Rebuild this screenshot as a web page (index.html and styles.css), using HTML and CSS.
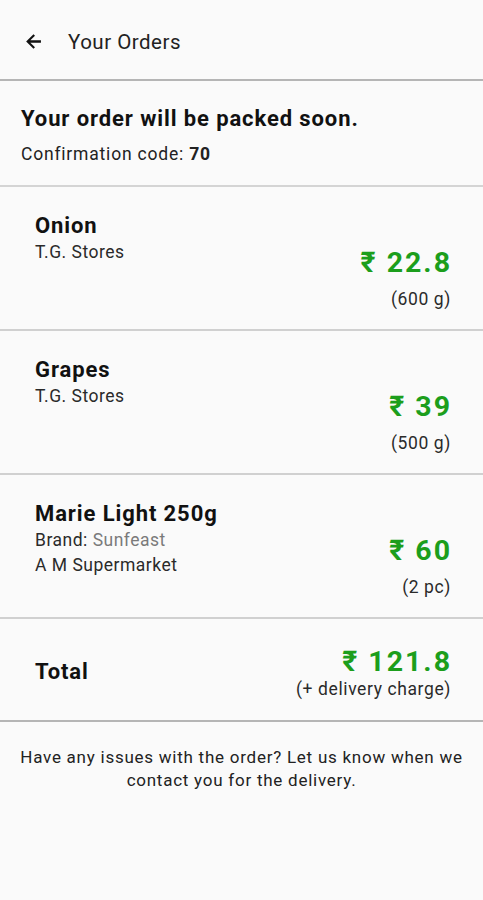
FILE: index.html
```html
<!DOCTYPE html>
<html>
<head>
<meta charset="utf-8">
<link rel="stylesheet" href="styles.css">
</head>
<body>
<div class="app">
  <header class="topbar">
    <svg class="back" width="21" height="21" viewBox="0 0 24 24"><path d="M20.5 10.6H8.4l5.3-5.3L12 3.6 3.6 12l8.4 8.4 1.7-1.7-5.3-5.3h12.1v-2.8z" fill="#111"/></svg>
    <span class="title">Your Orders</span>
  </header>
  <section class="status">
    <div class="status-title">Your order will be packed soon.</div>
    <div class="status-code">Confirmation code: <b>70</b></div>
  </section>
  <section class="item">
    <div class="item-left">
      <div class="item-name">Onion</div>
      <div class="item-sub">T.G. Stores</div>
    </div>
    <div class="item-right">
      <div class="price">₹ 22.8</div>
      <div class="qty">(600 g)</div>
    </div>
  </section>
  <section class="item">
    <div class="item-left">
      <div class="item-name">Grapes</div>
      <div class="item-sub">T.G. Stores</div>
    </div>
    <div class="item-right">
      <div class="price">₹ 39</div>
      <div class="qty">(500 g)</div>
    </div>
  </section>
  <section class="item">
    <div class="item-left">
      <div class="item-name">Marie Light 250g</div>
      <div class="item-sub">Brand: <span class="brand">Sunfeast</span></div>
      <div class="item-sub">A M Supermarket</div>
    </div>
    <div class="item-right">
      <div class="price">₹ 60</div>
      <div class="qty">(2 pc)</div>
    </div>
  </section>
  <section class="total">
    <div class="total-label">Total</div>
    <div class="total-right">
      <div class="price">₹ 121.8</div>
      <div class="qty">(+ delivery charge)</div>
    </div>
  </section>
  <p class="note">Have any issues with the order? Let us know when we contact you for the delivery.</p>
</div>
</body>
</html>
```
FILE: styles.css
```css
html, body {
  margin: 0;
  padding: 0;
  background: #fafafa;
}
body {
  font-family: Roboto, "Liberation Sans", sans-serif;
  color: #111;
}
.app {
  width: 483px;
  min-height: 900px;
  background: #fafafa;
}
.topbar {
  height: 81px;
  display: flex;
  align-items: center;
  padding: 4px 0 0 23px;
  box-sizing: border-box;
  border-bottom: 2px solid #b5b5b5;
}
.back {
  display: block;
}
.title {
  margin-left: 24px;
  font-size: 20.5px;
  letter-spacing: 0.5px;
  color: #222;
}
.status {
  height: 106px;
  box-sizing: border-box;
  padding: 24px 21px 0;
  border-bottom: 2px solid #d4d4d4;
}
.status-title {
  font-size: 22px;
  font-weight: bold;
  line-height: 28px;
  letter-spacing: 0.9px;
}
.status-code {
  font-size: 17.5px;
  line-height: 22px;
  margin-top: 10px;
  letter-spacing: 0.8px;
  color: #222;
}
.item {
  height: 144px;
  box-sizing: border-box;
  padding: 25px 33px 19px 35px;
  display: flex;
  justify-content: space-between;
  border-bottom: 2px solid #d0d0d0;
}
.item-left {
  align-self: flex-start;
}
.item-name {
  font-size: 22px;
  font-weight: bold;
  line-height: 28px;
  letter-spacing: 0.9px;
}
.item-sub {
  font-size: 17.5px;
  line-height: 25px;
  letter-spacing: 0.5px;
  color: #2a2a2a;
}
.brand {
  color: #7a7a7a;
}
.item-right, .total-right {
  align-self: flex-end;
  text-align: right;
}
.price {
  font-size: 28.5px;
  font-weight: bold;
  color: #1c9e1c;
  line-height: 34px;
  letter-spacing: 2px;
  margin-right: -2px;
}
.qty {
  font-size: 17.5px;
  color: #2a2a2a;
  line-height: 22px;
  letter-spacing: 0.6px;
  margin-top: 8px;
  margin-right: -1px;
}
.total {
  height: 103px;
  box-sizing: border-box;
  padding: 5px 33px 0 35px;
  display: flex;
  justify-content: space-between;
  align-items: center;
  border-bottom: 2px solid #b5b5b5;
}
.total-label {
  font-size: 22px;
  font-weight: bold;
  line-height: 28px;
  letter-spacing: 0.9px;
}
.total-right {
  align-self: center;
}
.total-right .qty {
  margin-top: -1px;
}
.note {
  margin: 24px 10px 0;
  text-align: center;
  font-size: 17px;
  line-height: 22.5px;
  letter-spacing: 0.75px;
  color: #222;
}
```
